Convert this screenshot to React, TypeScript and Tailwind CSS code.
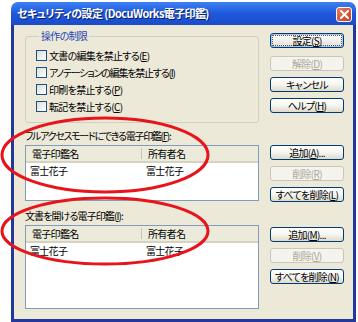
import type { ReactNode } from "react";

const jp = "font-['MS_UI_Gothic','Noto_Sans_CJK_JP',sans-serif] [font-feature-settings:'palt','pwid']";

function Mn({ children }: { children: ReactNode }) {
  return <span className="underline underline-offset-1">{children}</span>;
}

interface XpButtonProps {
  children: ReactNode;
  disabled?: boolean;
  isDefault?: boolean;
}

function XpButton({ children, disabled, isDefault }: XpButtonProps) {
  if (disabled) {
    return (
      <div className="flex h-[15px] w-[74px] items-center justify-center rounded-[3px] border border-[#c9c7ba] bg-[#f4f3ee] text-[#aca899] leading-none">
        {children}
      </div>
    );
  }
  return (
    <div
      className={
        isDefault
          ? "flex h-[15px] w-[74px] items-center justify-center rounded-[3px] border border-[#003c74] bg-linear-to-b from-white to-[#e3e1d5] p-[1px] leading-none shadow-[inset_0_0_0_1px_#a6c2f0]"
          : "flex h-[15px] w-[74px] items-center justify-center rounded-[3px] border border-[#003c74] bg-linear-to-b from-white via-[#f6f5f0] to-[#dedbcb] leading-none"
      }
    >
      {isDefault ? (
        <span className="flex h-full w-full items-center justify-center border border-dotted border-[#555]">
          {children}
        </span>
      ) : (
        children
      )}
    </div>
  );
}

function Check({ children, tight }: { children: ReactNode; tight?: boolean }) {
  return (
    <div className="flex h-[17px] items-center gap-[2px]">
      <span className="h-[11px] w-[11px] shrink-0 border border-[#1c5180] bg-linear-to-br from-[#dcdcd7] to-white" />
      <span className={tight ? "whitespace-nowrap tracking-[-1.2px]" : "whitespace-nowrap"}>{children}</span>
    </div>
  );
}

function SealList({ height }: { height: string }) {
  return (
    <div className={`mt-[3px] w-[234px] border border-[#7f9db9] bg-white ${height}`}>
      <div className="flex h-[17px] items-center border-b-2 border-[#d6d2c2] bg-[#ebeadb]">
        <div className="flex h-full w-[116px] items-center justify-between pl-[6px]">
          <span>電子印鑑名</span>
          <span className="h-[11px] w-px bg-[#c7c5b2]" />
        </div>
        <div className="pl-[6px]">所有者名</div>
      </div>
      <div className="flex h-[14px] items-center">
        <div className="w-[116px] pl-[4px]">富士花子</div>
        <div className="pl-[4px]">富士花子</div>
      </div>
    </div>
  );
}

export default function App() {
  return (
    <div className={`relative h-[322px] w-[358px] overflow-hidden bg-white text-[10px] tracking-[-0.7px] text-black ${jp}`}>
      <div className="ml-[11px] mt-[2px] flex h-[320px] w-[345px] flex-col">
        {/* Title bar */}
        <div className="flex h-[23px] items-center justify-between rounded-t-[7px] bg-linear-to-b from-[#3d80f2] via-[#1f58dc] to-[#1a4cc9] pl-[6px] pr-[4px]">
          <span className="whitespace-nowrap text-[11px] font-bold tracking-[-0.6px] text-white [text-shadow:1px_1px_0_#0a1d6a]">
            セキュリティの設定 (DocuWorks電子印鑑)
          </span>
          <div className="mt-[1px] flex h-[15px] w-[16px] items-center justify-center rounded-[3px] border border-white bg-linear-to-br from-[#e87a5c] to-[#c7391a]">
            <svg width="9" height="9" viewBox="0 0 9 9">
              <path d="M1 1 L8 8 M8 1 L1 8" stroke="white" strokeWidth="2" strokeLinecap="square" />
            </svg>
          </div>
        </div>

        {/* Body */}
        <div className="flex flex-1 flex-col border-x-[3px] border-b-[3px] border-[#22389c] bg-[#ece9d8] pl-[11px] pr-[9px]">
          {/* Restrictions */}
          <div className="flex gap-[11px]">
            <fieldset className="mt-[5px] w-[234px] rounded-[3px] border border-[#d0d0bf] pb-[7px] pl-[10px] pt-[5px]">
              <legend className="ml-[3px] px-[2px] leading-[12px] text-[#1f47b5]">操作の制限</legend>
              <Check>
                文書の編集を禁止する(<Mn>E</Mn>)
              </Check>
              <Check tight>
                アノテーションの編集を禁止する(<Mn>I</Mn>)
              </Check>
              <Check>
                印刷を禁止する(<Mn>P</Mn>)
              </Check>
              <Check>
                転記を禁止する(<Mn>C</Mn>)
              </Check>
            </fieldset>
            <div className="mt-[8px] flex flex-col gap-[6px]">
              <XpButton isDefault>
                設定(<Mn>S</Mn>)
              </XpButton>
              <div className="mt-[2px]">
                <XpButton disabled>
                  解除(<Mn>D</Mn>)
                </XpButton>
              </div>
              <XpButton>キャンセル</XpButton>
              <XpButton>
                ヘルプ(<Mn>H</Mn>)
              </XpButton>
            </div>
          </div>

          {/* Full access seals */}
          <div className="mt-[7px] flex gap-[11px]">
            <div className="flex flex-col">
              <div className="whitespace-nowrap leading-[12px] tracking-[-1.3px]">
                フルアクセスモードにできる電子印鑑(<Mn>F</Mn>):
              </div>
              <SealList height="h-[56px]" />
            </div>
            <div className="mt-[15px] flex flex-col gap-[6px]">
              <XpButton>
                追加(<Mn>A</Mn>)...
              </XpButton>
              <XpButton disabled>
                削除(<Mn>R</Mn>)
              </XpButton>
              <XpButton>
                すべてを削除(<Mn>L</Mn>)
              </XpButton>
            </div>
          </div>

          {/* Open seals */}
          <div className="mt-[8px] flex gap-[11px]">
            <div className="flex flex-col">
              <div className="whitespace-nowrap leading-[12px] tracking-[-0.9px]">
                文書を開ける電子印鑑(<Mn>I</Mn>):
              </div>
              <SealList height="h-[84px]" />
            </div>
            <div className="mt-[17px] flex flex-col gap-[6px]">
              <XpButton>
                追加(<Mn>M</Mn>)...
              </XpButton>
              <XpButton disabled>
                削除(<Mn>V</Mn>)
              </XpButton>
              <XpButton>
                すべてを削除(<Mn>N</Mn>)
              </XpButton>
            </div>
          </div>
        </div>
      </div>

      {/* Red annotation ellipses */}
      <svg className="pointer-events-none absolute inset-0" width="358" height="322" viewBox="0 0 358 322">
        <ellipse cx="105" cy="155" rx="103" ry="37" fill="none" stroke="#e8141b" strokeWidth="3" />
        <ellipse cx="105" cy="231" rx="103" ry="33" fill="none" stroke="#e8141b" strokeWidth="3" />
      </svg>
    </div>
  );
}
